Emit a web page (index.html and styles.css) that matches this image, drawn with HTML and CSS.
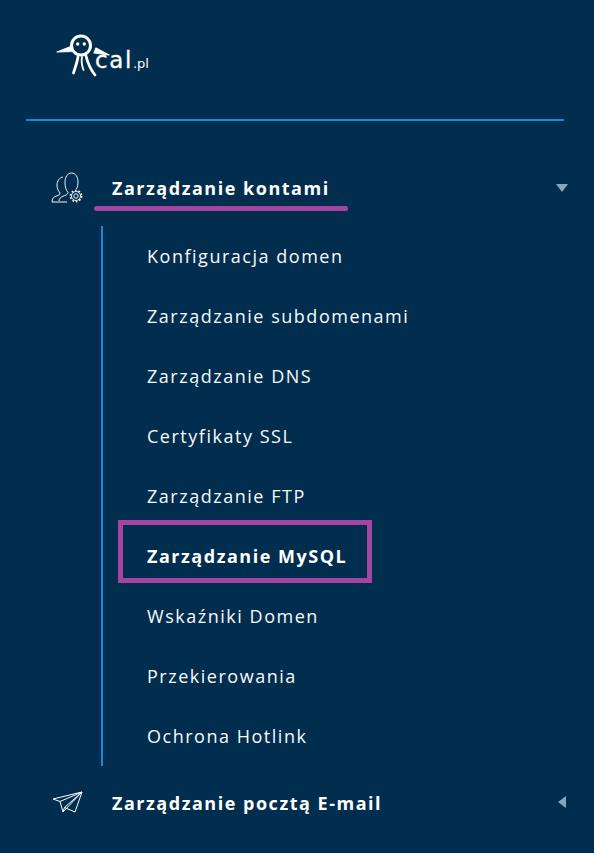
FILE: index.html
```html
<!DOCTYPE html>
<html lang="pl">
<head>
<meta charset="utf-8">
<title>Zarządzanie kontami</title>
<link rel="stylesheet" href="styles.css">
</head>
<body>
<aside class="sidebar">
  <div class="brand">
    <svg class="logo" width="100" height="50" viewBox="0 0 100 50" fill="none" stroke="#fff" stroke-linecap="round" stroke-linejoin="round">
      <ellipse cx="32" cy="12.500" rx="9.500" ry="9.500" stroke-width="3"/>
      <circle cx="28.700" cy="11" r="1.700" fill="#fff" stroke="none"/>
      <circle cx="35.300" cy="11" r="1.700" fill="#fff" stroke="none"/>
      <path d="M23 13 8 19 24.500 18.500ZM47 15 60 22 45 20Z" fill="#fff" stroke-width="1.200"/>
      <path d="M29 24C28 30 26 35 24.500 40" stroke-width="2.800"/>
      <path d="M33 24C32 29 33 33 34.500 37" stroke-width="1.800"/>
      <path d="M37 23C39 31 42 37 46 42" stroke-width="2.800"/>
    </svg>
    <span class="brand-name">cal<small class="brand-tld">.pl</small></span>
  </div>
  <hr class="rule">
  <nav class="menu">
    <div class="head head-open">
      <svg class="head-icon" width="32" height="32" viewBox="0 0 32 32" fill="none" stroke="#f0f4f7" stroke-width="1">
        <path d="M1 30c0-3.500 1.500-5 4.500-6 2.500-.8 3.500-1.500 3.500-3-1.700-2-3-4.500-3-8 0-4 2.500-7.500 6-8"/>
        <path d="M1 30h15"/>
        <path d="M8 29c0-2.500 2-4 4-4.800 2.500-1 5-1.700 5-3.700-2-2.500-3-5.500-3-10C14 5 16.500 1 20.500 1S27 5 27 10c0 2.500-.5 5-1.500 7"/>
        <circle cx="25" cy="24" r="2.200"/>
        <circle cx="25" cy="24" r="5.600" stroke-width="1.600" stroke-dasharray="1.800 1.720"/>
        <circle cx="25" cy="24" r="4.500"/>
      </svg>
      <span class="head-label">Zarządzanie kontami</span>
      <span class="caret-down"></span>
    </div>
    <ul class="submenu">
      <li class="item">Konfiguracja domen</li>
      <li class="item">Zarządzanie subdomenami</li>
      <li class="item">Zarządzanie DNS</li>
      <li class="item">Certyfikaty SSL</li>
      <li class="item">Zarządzanie FTP</li>
      <li class="item item-active">Zarządzanie MySQL</li>
      <li class="item">Wskaźniki Domen</li>
      <li class="item">Przekierowania</li>
      <li class="item">Ochrona Hotlink</li>
    </ul>
    <div class="head head-mail">
      <svg class="head-icon" width="32" height="32" viewBox="0 0 32 32" fill="none" stroke="#fff" stroke-width="1" stroke-linejoin="round">
        <path d="M2 12 31 5 24 25 13.500 20.500 12 25 9 14.500Z"/>
        <path d="M9 14.500 31 5 12 25M13.500 20.500 31 5"/>
      </svg>
      <span class="head-label">Zarządzanie pocztą E-mail</span>
      <span class="caret-left"></span>
    </div>
  </nav>
</aside>
</body>
</html>
```
FILE: styles.css
```css
*, *::before, *::after { box-sizing: border-box; }
html, body { margin: 0; height: 100%; }
body {
  background: #012d4e;
  color: #fff;
  font-family: "Open Sans", sans-serif;
  overflow: hidden;
}
.sidebar { height: 853px; padding: 0 30px 0 26px; }
.brand {
  height: 119px;
  padding: 33px 0 0 23px;
  display: flex;
  align-items: flex-start;
  position: relative;
}
.logo { display: block; }
.brand-name {
  position: absolute;
  left: 69px;
  top: 47px;
  font-family: "DejaVu Sans", sans-serif;
  font-size: 23px;
  line-height: 26px;
  letter-spacing: 1.6px;
  white-space: nowrap;
  -webkit-text-stroke: .3px #fff;
}
.brand-tld { font-size: 13px; letter-spacing: 0; -webkit-text-stroke: 0; }
.rule {
  margin: 0;
  border: 0;
  height: 2px;
  width: 538px;
  background: #1b87d9;
}
.menu { padding-top: 36px; }
.head {
  display: flex;
  align-items: center;
  height: 60px;
  position: relative;
  font-size: 18px;
  font-weight: 700;
  letter-spacing: 1.52px;
  white-space: nowrap;
}
.head-open { margin-top: 2px; height: 58px; }
.head-open::after {
  content: "";
  position: absolute;
  left: 68px;
  top: 47px;
  width: 254px;
  height: 5px;
  border-radius: 3px;
  background: #a5459f;
}
.head-icon { margin-left: 25px; flex: none; }
.head-label { margin-left: 29px; }
.caret-down, .caret-left { position: absolute; width: 0; height: 0; }
.caret-down {
  right: -4px;
  top: 25px;
  border-left: 6.500px solid transparent;
  border-right: 6.500px solid transparent;
  border-top: 8px solid #8aa4b8;
}
.caret-left {
  right: -2px;
  top: 23px;
  border-top: 6.500px solid transparent;
  border-bottom: 6.500px solid transparent;
  border-right: 8px solid #8aa4b8;
}
.submenu {
  list-style: none;
  margin: 9px 0 0 75px;
  padding: 0;
  width: 420px;
  border-left: 2px solid #1b87d9;
  height: 540px;
}
.item {
  height: 60px;
  line-height: 60px;
  padding-left: 44px;
  font-size: 18px;
  letter-spacing: 1.52px;
  color: #f8fafb;
  position: relative;
  white-space: nowrap;
}
.item-active { font-weight: 700; color: #fff; }
.item-active::after {
  content: "";
  position: absolute;
  left: 15px;
  top: -6px;
  width: 254px;
  height: 63px;
  border: 5px solid #a5459f;
}
.head-mail { margin-top: 7px; }
```
